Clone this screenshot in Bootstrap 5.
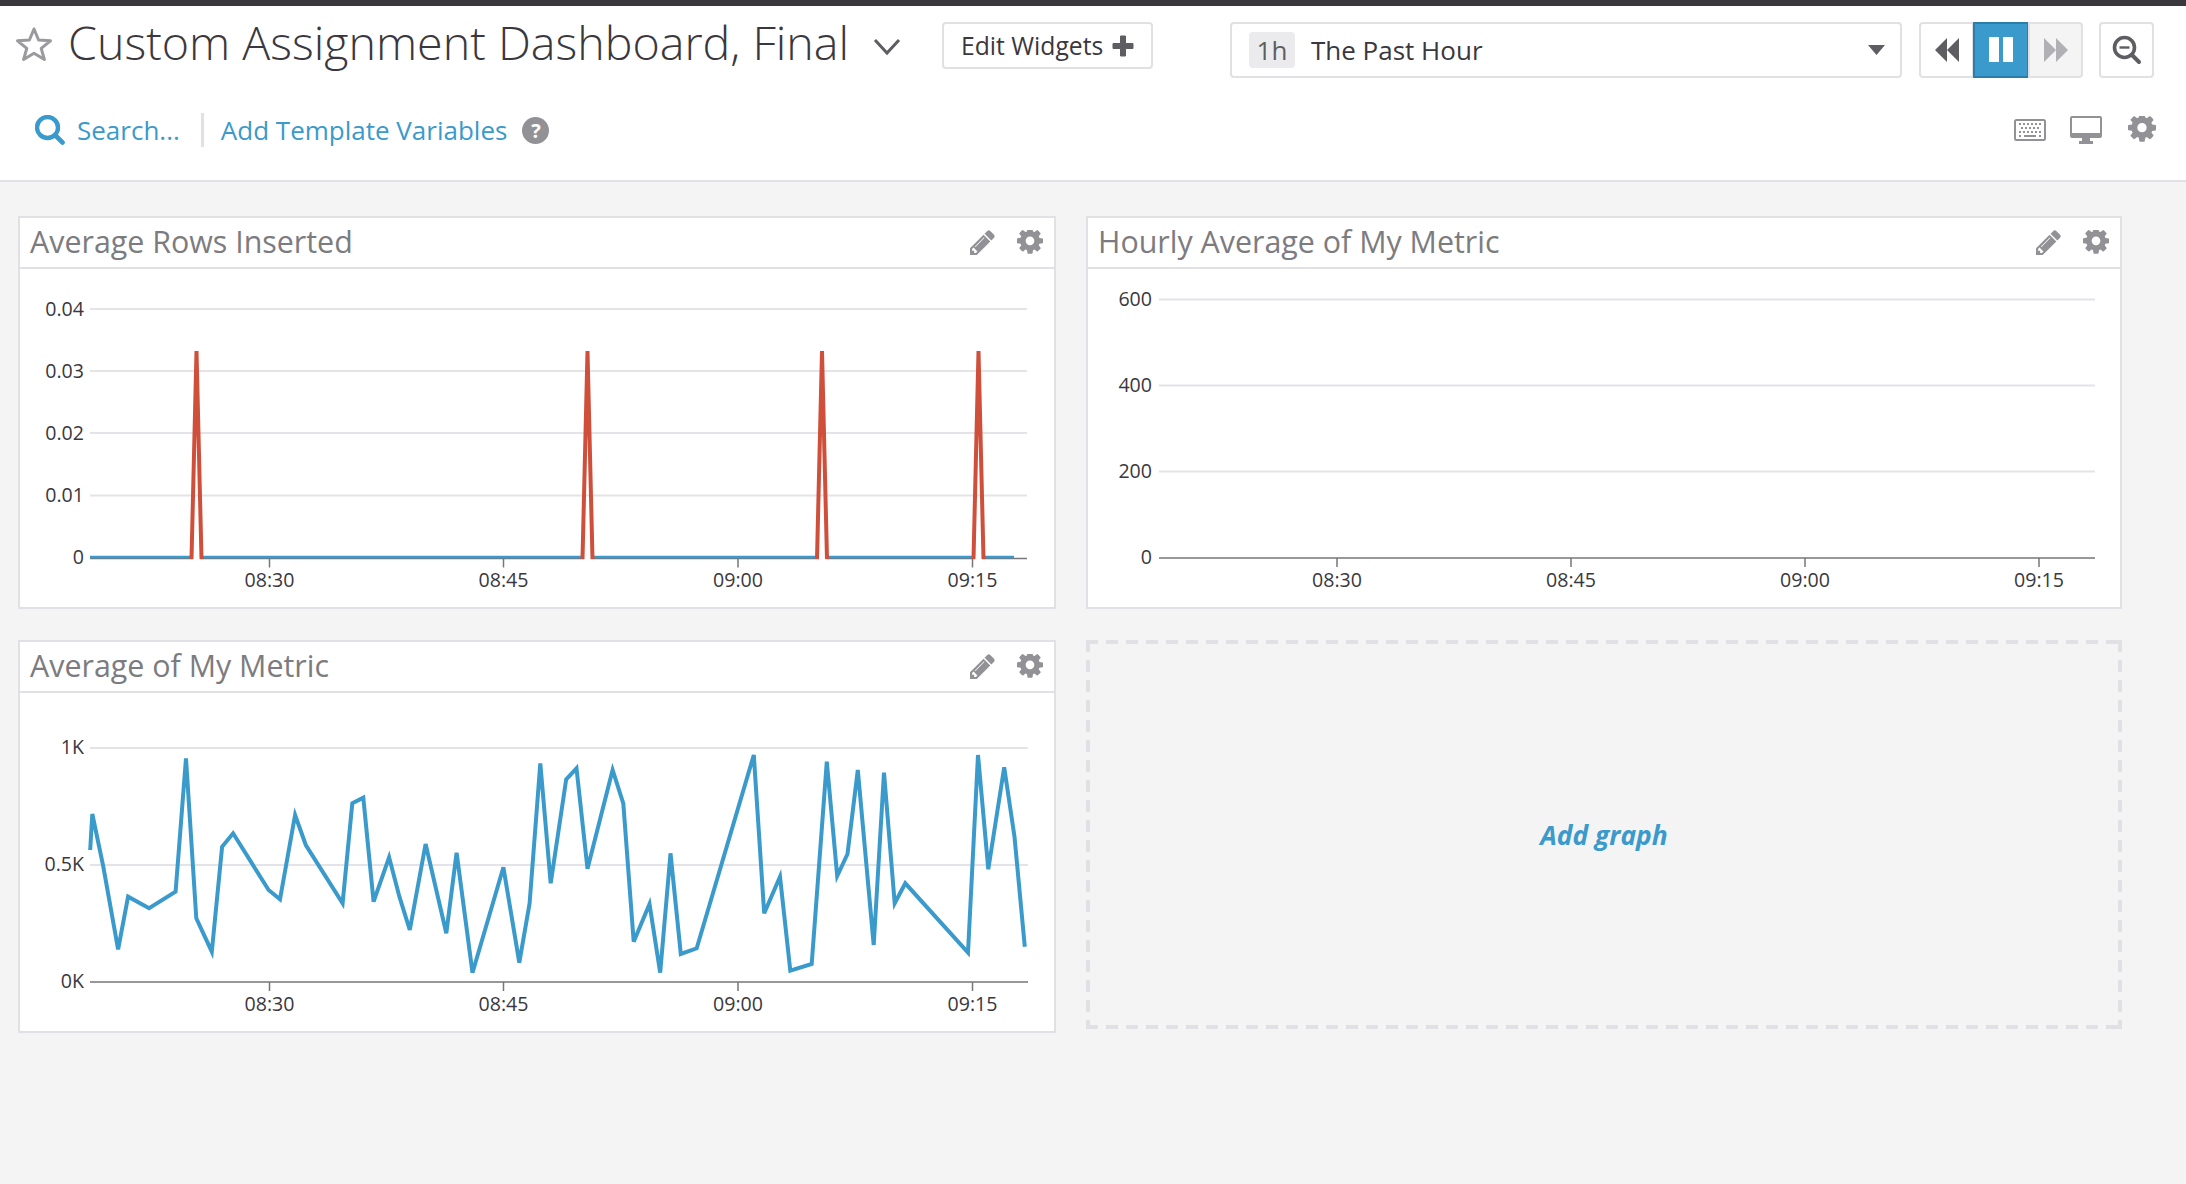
<!DOCTYPE html>
<html lang="en">
<head>
    <meta charset="UTF-8">
    <meta name="viewport" content="width=device-width, initial-scale=1.0">
    <title>Custom Assignment Dashboard, Final</title>
    <link href="https://cdn.jsdelivr.net/npm/bootstrap@5.3.3/dist/css/bootstrap.min.css" rel="stylesheet">
    <script src="https://cdn.jsdelivr.net/npm/bootstrap@5.3.3/dist/js/bootstrap.bundle.min.js"></script>
    <style>
        body { background: #f4f4f5; font-family: "Open Sans", sans-serif; color: #3a383d; min-height: 1184px; }
        a { color: #3a9acb; text-decoration: none; }
        svg { display: block; flex: none; }

        .page-head { background: #fff; border-top: 6px solid #3a383d; border-bottom: 2px solid #e0e0e5; height: 182px; }
        .head-top { padding: 16px 0 0 15px; height: 72px; }
        .head-sub { padding-left: 35px; padding-right: 30px; margin-top: 35px; height: 34px; }

        .dash-title { width: 805px; margin: 0 0 0 15px; font-size: 46.6px; font-weight: 300; line-height: 40px; white-space: nowrap; }
        .edit-btn { width: 211px; height: 47px; margin-left: 41px; font-size: 24.7px; padding: 0 17px; background: #fff; border: 2px solid #e0e0e5; border-radius: 4px; color: #3a383d; }
        .time-select { width: 672px; height: 56px; margin-left: 77px; padding: 0 15px 0 17px; background: #fff; border: 2px solid #e0e0e5; border-radius: 4px; font-size: 26px; }
        .time-badge { background: #ebebed; color: #5e5e62; border-radius: 4px; width: 46px; height: 36px; margin-right: 16px; }
        .tool-group { margin-left: 17px; width: 164px; height: 56px; }
        .tool-btn { width: 55px; height: 56px; padding: 0; background: #fff; border: 2px solid #e0e0e5; border-radius: 4px; }
        .tool-btn.is-on { background: #3a9acb; border-color: #2b7ea9; width: 56px; }
        .tool-btn.is-off { background: #f4f4f5; opacity: 1; }
        .zoom-btn { margin-left: 16px; }

        .search-link, .tpl-link { font-size: 26px; line-height: 34px; white-space: nowrap; }
        .search-link { margin-left: 12px; }
        .sub-sep { width: 3px; height: 34px; background: #e0e0e5; margin: 0 17px 0 21px; }
        .help-mark { width: 27px; height: 27px; margin-left: 15px; background: #929296; color: #fff; font-size: 20px; font-weight: 700; line-height: 27px; text-align: center; border-radius: 50%; }
        .head-gear { margin-left: 26px; }

        .dash-grid { display: grid; grid-template-columns: 1038px 1036px; column-gap: 30px; row-gap: 31px; padding: 34px 0 0 18px; }
        .dash-card { height: 393px; border: 2px solid #e0e0e5; border-radius: 0; background: #fff; }
        .dash-card .card-header { height: 51px; padding: 0 11px 0 10px; background: #fff; border-bottom: 2px solid #e0e0e5; border-radius: 0; }
        .dash-card .card-body { padding: 0; }
        .widget-title { margin: 0; font-size: 30.4px; font-weight: 400; color: #7c7c80; line-height: 1; white-space: nowrap; }
        .icon-gray { fill: #929296; }
        .gear-gap { margin-left: 22px; }

        .chart-text { font-family: "Open Sans", sans-serif; font-size: 19.6px; fill: #3a383d; }
        .grid-line { stroke: #e4e4e8; stroke-width: 2; }
        .axis-line { stroke: #77777b; stroke-width: 1.5; fill: none; }
        .line-blue { stroke: #3a9acb; stroke-width: 4; fill: none; stroke-linejoin: miter; }
        .line-base { stroke: #3a9acb; stroke-width: 2.5; fill: none; }
        .line-red { stroke: #cf4f3b; stroke-width: 4; fill: none; stroke-linejoin: miter; }

        /* dashes are 12 on / 8 off in the original, a css dashed border can't do that */
        .add-box {
            height: 389px; padding-top: 2px; font-size: 26.4px; font-weight: 700; font-style: italic;
            background-image:
                repeating-linear-gradient(90deg, #e0e0e5 0 12px, transparent 12px 20px),
                repeating-linear-gradient(90deg, #e0e0e5 0 12px, transparent 12px 20px),
                repeating-linear-gradient(180deg, #e0e0e5 0 12px, transparent 12px 20px),
                repeating-linear-gradient(180deg, #e0e0e5 0 12px, transparent 12px 20px);
            background-size: 100% 4px, 100% 4px, 4px 100%, 4px 100%;
            background-position: left top, left bottom, left top, right top;
            background-repeat: no-repeat;
        }
    </style>
</head>
<body>
    <svg width="0" height="0" class="position-absolute">
        <symbol id="ico-gear" viewBox="0 0 1536 1536"><path d="M1024 640q0-106-75-181t-181-75-181 75-75 181 75 181 181 75 181-75 75-181zm512-109v222q0 12-8 23t-20 13l-185 28q-19 54-39 91 35 50 107 138 10 12 10 25t-9 23q-27 37-99 108t-94 71q-12 0-26-9l-138-108q-44 23-91 38-16 136-29 186-7 28-36 28h-222q-14 0-24.5-8.5t-11.5-21.5l-28-184q-49-16-90-37l-141 107q-10 9-25 9-14 0-25-11-126-114-165-168-7-10-7-23 0-12 8-23 15-21 51-66.5t54-70.5q-27-50-41-99l-183-27q-13-2-21-12.5t-8-23.5v-222q0-12 8-23t19-13l186-28q14-46 39-92-40-57-107-138-10-12-10-24 0-10 9-23 26-36 98.5-107.5t94.5-71.5q13 0 26 10l138 107q44-23 91-38 16-136 29-186 7-28 36-28h222q14 0 24.5 8.5t11.5 21.5l28 184q49 16 90 37l142-107q9-9 24-9 13 0 25 10 129 119 165 170 7 8 7 22 0 12-8 23-15 21-51 66.5t-54 70.5q26 50 41 98l183 28q13 2 21 12.5t8 23.5z"/></symbol>
        <symbol id="ico-pencil" viewBox="0 0 1536 1536"><path d="M363 1408l91-91-235-235-91 91v107h128v128h107zm523-928q0-22-22-22-10 0-17 7l-542 542q-7 7-7 17 0 22 22 22 10 0 17-7l542-542q7-7 7-17zm-54-192l416 416-832 832h-416v-416zm683 96q0 53-37 90l-166 166-416-416 166-165q36-38 90-38 53 0 91 38l235 234q37 39 37 91z"/></symbol>
    </svg>

    <!-- Top header -->
    <header class="page-head">
        <div class="head-top d-flex align-items-start">
            <svg width="38" height="36" viewBox="0 0 38 36" class="mt-1"><polygon points="19,3 23.600,14 35.500,14.800 26.200,22.400 29.400,33.500 19,27.200 8.600,33.500 11.800,22.400 2.500,14.800 14.400,14" fill="none" stroke="#9a9a9e" stroke-width="3" stroke-linejoin="round"/></svg>
            <h1 class="dash-title">Custom Assignment Dashboard, Final</h1>
            <svg width="28" height="18" viewBox="0 0 28 18" style="margin-top:16px"><polyline points="2,2 14,15 26,2" fill="none" stroke="#5e5e62" stroke-width="3"/></svg>
            <button type="button" class="btn edit-btn d-flex align-items-center justify-content-between">
                Edit Widgets
                <svg width="22" height="22" viewBox="0 0 22 22"><path d="M8.500 1h5v7.500H21v5h-7.500V21h-5v-7.500H1v-5h7.500z" fill="#5e5e62" stroke="#5e5e62" stroke-linejoin="round"/></svg>
            </button>
            <div class="time-select d-flex align-items-center">
                <span class="time-badge d-flex align-items-center justify-content-center">1h</span>
                <span>The Past Hour</span>
                <svg width="17" height="10" viewBox="0 0 17 10" class="ms-auto"><polygon points="0,0 17,0 8.500,10" fill="#5e5e62"/></svg>
            </div>
            <div class="btn-group tool-group" role="group">
                <button type="button" class="btn tool-btn d-flex align-items-center justify-content-center">
                    <svg width="26" height="26" viewBox="0 0 26 26"><path d="M13 1v24L1 13zM25 1v24L13 13z" fill="#5e5e62"/></svg>
                </button>
                <button type="button" class="btn tool-btn is-on d-flex align-items-center justify-content-center">
                    <svg width="26" height="26" viewBox="0 0 26 26"><path d="M1 0h10v25H1zM15 0h10v25H15z" fill="#fff"/></svg>
                </button>
                <button type="button" class="btn tool-btn is-off d-flex align-items-center justify-content-center">
                    <svg width="26" height="26" viewBox="0 0 26 26"><path d="M1 1v24l12-12zM13 1v24l12-12z" fill="#b1b1b5"/></svg>
                </button>
            </div>
            <button type="button" class="btn tool-btn zoom-btn d-flex align-items-center justify-content-center">
                <svg width="30" height="30" viewBox="0 0 30 30"><circle cx="12.500" cy="12.500" r="10" fill="none" stroke="#5e5e62" stroke-width="3.600"/><path d="M7.500 12.500h10" stroke="#5e5e62" stroke-width="2.400"/><path d="M20 20l7 7" stroke="#5e5e62" stroke-width="4" stroke-linecap="round"/></svg>
            </button>
        </div>

        <div class="head-sub d-flex align-items-center">
            <svg width="30" height="30" viewBox="0 0 30 30"><circle cx="12.500" cy="12.500" r="10.500" fill="none" stroke="#3a9acb" stroke-width="4.400"/><path d="M20.500 20.500l7 7" stroke="#3a9acb" stroke-width="4.600" stroke-linecap="round"/></svg>
            <a href="#" class="search-link">Search...</a>
            <span class="sub-sep"></span>
            <a href="#" class="tpl-link">Add Template Variables</a>
            <span class="help-mark">?</span>

            <svg width="32" height="22" viewBox="0 0 32 22" class="ms-auto">
                <rect x="1" y="1" width="30" height="20" rx="1.500" fill="none" stroke="#929296" stroke-width="2"/>
                <path d="M5 5h2M9 5h2M13 5h2M17 5h2M21 5h2M25 5h2M7 9h2M11 9h2M15 9h2M19 9h2M23 9h2M5 13h2M9 13h2M13 13h2M17 13h2M21 13h2M25 13h2M10 17h12M5 17h2M25 17h2" stroke="#929296" stroke-width="2"/>
            </svg>
            <svg width="32" height="28" viewBox="0 0 32 28" class="ms-4">
                <path d="M2 0h28a2 2 0 0 1 2 2v18a2 2 0 0 1-2 2H20v3h3v3H9v-3h3v-3H2a2 2 0 0 1-2-2V2a2 2 0 0 1 2-2zm0 2v15h28V2z" fill="#929296"/>
            </svg>
            <svg width="28" height="28" class="icon-gray head-gear"><use href="#ico-gear"/></svg>
        </div>
    </header>

    <!-- Widgets -->
    <main class="dash-grid">
        <div class="card dash-card">
            <div class="card-header d-flex align-items-center">
                <h2 class="widget-title">Average Rows Inserted</h2>
                <svg width="25" height="25" class="icon-gray ms-auto"><use href="#ico-pencil"/></svg>
                <svg width="26" height="26" class="icon-gray gear-gap"><use href="#ico-gear"/></svg>
            </div>
            <div class="card-body">
                <svg width="1034" height="338" viewBox="20 269 1034 338">
                    <g class="grid-line"><line x1="90" x2="1027" y1="309" y2="309"/><line x1="90" x2="1027" y1="371" y2="371"/><line x1="90" x2="1027" y1="433" y2="433"/><line x1="90" x2="1027" y1="495.500" y2="495.500"/></g>
                    <path class="axis-line" d="M90 558.500H1027M269.500 558.500v9M503.500 558.500v9M738 558.500v9M972.500 558.500v9"/>
                    <path class="line-base" d="M90 557H191M202 557H582M593 557H817M827 557H973M984 557H1014"/>
                    <path d="M193 558h7M584 558h7M819 558h7M975 558h7" stroke="#fff" stroke-width="4"/>
                    <path class="line-red" d="M191.500 559L196.500 351L201.500 559M582.500 559L587.500 351L592.500 559M817 559L822 351L827 559M973.500 559L978.500 351L983.500 559"/>
                    <g class="chart-text" text-anchor="end"><text x="84" y="316">0.04</text><text x="84" y="378">0.03</text><text x="84" y="440">0.02</text><text x="84" y="502">0.01</text><text x="84" y="564">0</text></g>
                    <g class="chart-text" text-anchor="middle"><text x="269.500" y="587">08:30</text><text x="503.500" y="587">08:45</text><text x="738" y="587">09:00</text><text x="972.500" y="587">09:15</text></g>
                </svg>
            </div>
        </div>

        <div class="card dash-card">
            <div class="card-header d-flex align-items-center">
                <h2 class="widget-title">Hourly Average of My Metric</h2>
                <svg width="25" height="25" class="icon-gray ms-auto"><use href="#ico-pencil"/></svg>
                <svg width="26" height="26" class="icon-gray gear-gap"><use href="#ico-gear"/></svg>
            </div>
            <div class="card-body">
                <svg width="1032" height="338" viewBox="1088 269 1032 338">
                    <g class="grid-line"><line x1="1159" x2="2095" y1="299.500" y2="299.500"/><line x1="1159" x2="2095" y1="385.500" y2="385.500"/><line x1="1159" x2="2095" y1="471.500" y2="471.500"/></g>
                    <path class="axis-line" d="M1159 558H2095M1337 558v9M1571 558v9M1805 558v9M2039 558v9"/>
                    <g class="chart-text" text-anchor="end"><text x="1152" y="306">600</text><text x="1152" y="392">400</text><text x="1152" y="478">200</text><text x="1152" y="564">0</text></g>
                    <g class="chart-text" text-anchor="middle"><text x="1337" y="587">08:30</text><text x="1571" y="587">08:45</text><text x="1805" y="587">09:00</text><text x="2039" y="587">09:15</text></g>
                </svg>
            </div>
        </div>

        <div class="card dash-card">
            <div class="card-header d-flex align-items-center">
                <h2 class="widget-title">Average of My Metric</h2>
                <svg width="25" height="25" class="icon-gray ms-auto"><use href="#ico-pencil"/></svg>
                <svg width="26" height="26" class="icon-gray gear-gap"><use href="#ico-gear"/></svg>
            </div>
            <div class="card-body">
                <svg width="1034" height="338" viewBox="20 693 1034 338">
                    <g class="grid-line"><line x1="90" x2="1028" y1="748" y2="748"/><line x1="90" x2="1028" y1="865" y2="865"/></g>
                    <path class="axis-line" d="M90 982H1028M269.500 982v9M503.500 982v9M738 982v9M972.500 982v9"/>
                    <polyline class="line-blue" points="90.200,850 92.300,814 103.300,866.700 118.100,949.300 128.100,896.700 149.100,908.300 175.600,891.700 186,758.300 196.300,918.300 211.800,951.700 222.100,846.700 233.100,833.300 268.600,890 280,899.300 295.100,815 305.800,845 342.600,903.300 352.300,803.300 363.300,797.700 373.600,901.700 389.100,857.300 399.400,896.700 409.800,930 425.600,844 446.300,933.300 456.600,852.700 472.500,972.700 503.400,867.300 519.300,962.700 529.600,903.300 540.300,763.300 550.700,883.300 566.200,779.300 576.500,768.300 587.500,868.700 612.600,770 623.300,803.300 633.700,941.700 649.500,904 660.200,972.700 670.500,853.300 680.800,954 696.700,948.300 753.800,755 764.200,913.300 780,876.700 790.300,970.700 811.700,964 826.800,761.700 837.200,876 847.500,854 857.800,770 873.700,945 884,772.700 894.700,903.300 905.300,883.300 968,952.700 978,755 988.300,869.300 1004.200,767.300 1014.500,836.700 1024.800,946.700"/>
                    <g class="chart-text" text-anchor="end"><text x="84" y="754">1K</text><text x="84" y="871">0.5K</text><text x="84" y="988">0K</text></g>
                    <g class="chart-text" text-anchor="middle"><text x="269.500" y="1011">08:30</text><text x="503.500" y="1011">08:45</text><text x="738" y="1011">09:00</text><text x="972.500" y="1011">09:15</text></g>
                </svg>
            </div>
        </div>

        <div class="add-box d-flex align-items-center justify-content-center">
            <a href="#">Add graph</a>
        </div>
    </main>
</body>
</html>
